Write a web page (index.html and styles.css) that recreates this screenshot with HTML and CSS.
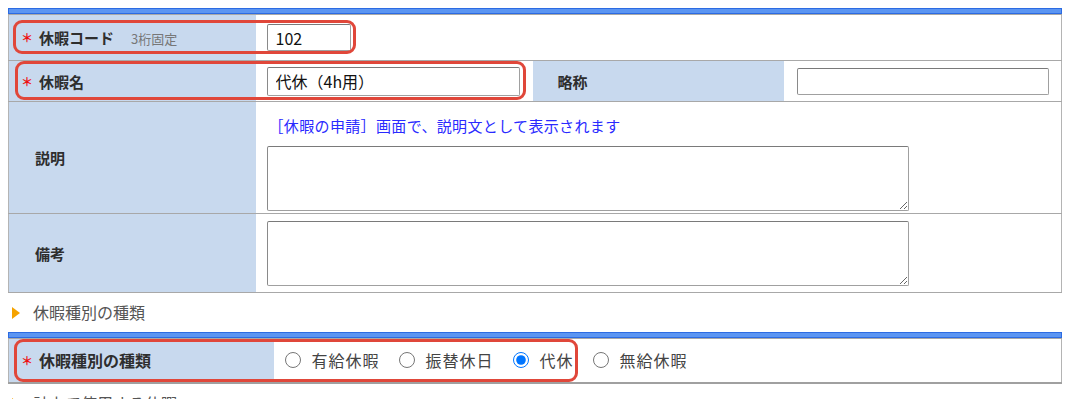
FILE: index.html
```html
<html>
<head>
    <title>休暇設定</title>
    <link rel="stylesheet" href="styles.css">
</head>
<body>
    <div class="page">
        <div class="bar"></div>
        <table class="form">
            <colgroup>
                <col class="c-label"><col class="c-val"><col class="c-label2"><col>
            </colgroup>
            <tr class="r-code">
                <th><span class="req">＊</span>休暇コード<span class="note">3桁固定</span></th>
                <td colspan="3"><input type="text" class="in-code" value="102"></td>
            </tr>
            <tr class="r-name">
                <th><span class="req">＊</span>休暇名</th>
                <td><input type="text" class="in-name" value="代休（4h用）"></td>
                <th class="th-short">略称</th>
                <td class="td-short"><input type="text" class="in-short"></td>
            </tr>
            <tr class="r-desc">
                <th class="plain">説明</th>
                <td colspan="3" class="top">
                    <div class="hint">［休暇の申請］画面で、説明文として表示されます</div>
                    <textarea class="ta"></textarea>
                </td>
            </tr>
            <tr class="r-memo">
                <th class="plain">備考</th>
                <td colspan="3"><textarea class="ta"></textarea></td>
            </tr>
        </table>

        <div class="section">休暇種別の種類</div>
        <div class="bar"></div>
        <table class="form form2">
            <colgroup>
                <col class="c-label3"><col>
            </colgroup>
            <tr class="r-kind">
                <th><span class="req">＊</span>休暇種別の種類</th>
                <td>
                    <div class="radios">
                        <label><input type="radio" name="kind">有給休暇</label>
                        <label><input type="radio" name="kind">振替休日</label>
                        <label><input type="radio" name="kind" checked>代休</label>
                        <label><input type="radio" name="kind">無給休暇</label>
                    </div>
                </td>
            </tr>
        </table>
        <div class="section">計上で使用する休暇</div>

        <div class="mark mark-code"></div>
        <div class="mark mark-name"></div>
        <div class="mark mark-kind"></div>
    </div>
</body>
</html>
```

FILE: styles.css
```css
body {
    margin: 8px;
    background: white;
    font-family: "Noto Sans CJK JP", "Noto Sans", sans-serif;
    color: #333;
}

.page {
    position: relative;
    width: 1054px;
}

.bar {
    height: 4px;
    background: #5b95f2;
    border: 1px solid #2c6be2;
}

.form {
    width: 100%;
    border-collapse: collapse;
    table-layout: fixed;
    border: 1px solid #b4b4b4;
}

.c-label { width: 247px; }
.c-val { width: 277px; }
.c-label2 { width: 251px; }
.c-label3 { width: 265px; }

.form th, .form td {
    border-top: 1px solid #a8a8a8;
    border-bottom: 1px solid #a8a8a8;
    padding: 0;
    vertical-align: middle;
}

.form th {
    background: #c8d9ee;
    text-align: left;
    font-size: 15px;
    font-weight: bold;
    color: #2e2e2e;
    padding-left: 12px;
    white-space: nowrap;
}

.form th.plain {
    padding-left: 26px;
}

.form th.th-short {
    padding-left: 25px;
}

.form2 th {
    font-size: 16px;
}

.form td {
    padding-left: 11px;
}

.form td.td-short {
    padding-left: 13px;
}

.req {
    display: inline-block;
    width: 18px;
    color: #ee1111;
    font-size: 12px;
    vertical-align: 1px;
}

.note {
    font-size: 13px;
    font-weight: normal;
    color: #777;
    margin-left: 17px;
}

.r-code th, .r-code td { height: 46px; }
.r-name th, .r-name td { height: 41px; }
.r-desc th, .r-desc td { height: 112px; }
.r-memo th, .r-memo td { height: 79px; }

input[type="text"], textarea {
    box-sizing: border-box;
    border: 1px solid #a0a0a0;
    border-top-color: #7a7a7a;
    border-left-color: #8a8a8a;
    border-radius: 2px;
    font-family: "Noto Sans CJK JP", "Noto Sans", sans-serif;
    font-size: 16px;
    color: #111;
    padding: 0 8px;
    margin: 0;
    display: block;
}

.in-code { width: 84px; height: 27px; }
.in-name { width: 253px; height: 29px; }
.in-short { width: 252px; height: 27px; }

.form td.top {
    vertical-align: top;
}

.hint {
    color: #2a2aff;
    font-size: 15px;
    line-height: 20px;
    letter-spacing: 0.35px;
    margin: 14px 0 10px 2px;
}

.ta {
    width: 642px;
    height: 65px;
    resize: both;
}

.section {
    height: 39px;
    line-height: 39px;
    font-size: 16px;
    color: #555;
    padding-left: 25px;
    position: relative;
}

.section::before {
    content: "";
    position: absolute;
    left: 4px;
    top: 14px;
    border-left: 8px solid #f5a300;
    border-top: 6px solid transparent;
    border-bottom: 6px solid transparent;
}

.form2 th, .form2 td {
    height: 44px;
}

.form2 {
    border-bottom: 2px solid #a0a0a0;
}

.radios {
    display: flex;
    align-items: center;
    gap: 19px;
    font-size: 16px;
    letter-spacing: 1px;
    color: #444;
}

.radios label {
    display: flex;
    align-items: center;
}

.radios input {
    width: 16px;
    height: 16px;
    margin: 0 11px 0 0;
}

.mark {
    position: absolute;
    border: 3px solid #e0473a;
    border-radius: 9px;
    box-sizing: border-box;
}

.mark-code { left: 5px; top: 12px; width: 343px; height: 34px; }
.mark-name { left: 7px; top: 53px; width: 511px; height: 39px; }
.mark-kind { left: 6px; top: 331px; width: 564px; height: 43px; }
```
